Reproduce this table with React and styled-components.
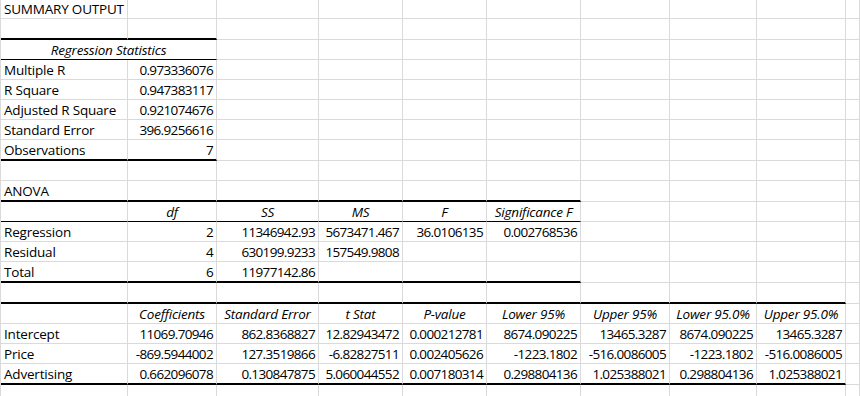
import React from 'react';
import styled, { createGlobalStyle } from 'styled-components';

const GlobalStyle = createGlobalStyle`
  html, body {
    margin: 0;
    padding: 0;
    background: #ffffff;
    overflow: hidden;
  }
`;

const GRID = '#dadada';
const COLS = '127px 89px 102px 84px 84px 94px 89px 87px 89px 1fr';

const Sheet = styled.div`
  width: 860px;
  height: 396px;
  overflow: hidden;
  border-left: 1px solid ${GRID};
  box-sizing: border-box;
  font-family: 'Open Sans', 'Noto Sans', sans-serif;
  font-size: 13.5px;
  color: #000;
`;

const Row = styled.div`
  display: grid;
  grid-template-columns: ${COLS};
  height: ${(props) => props.$h}px;
`;

const edgeStyle = {
  thick: '2px solid #000',
  thin: '1px solid #000',
};

const Cell = styled.div`
  box-sizing: border-box;
  display: flex;
  align-items: flex-end;
  justify-content: ${(props) =>
    props.$align === 'left' ? 'flex-start' : props.$align === 'center' ? 'center' : 'flex-end'};
  grid-column: span ${(props) => props.$span || 1};
  padding: 0 3px;
  border-right: 1px solid ${GRID};
  border-bottom: ${(props) => edgeStyle[props.$edge] || `1px solid ${GRID}`};
  font-style: ${(props) => (props.$italic ? 'italic' : 'normal')};
  letter-spacing: ${(props) => (props.$num ? '-0.65px' : '-0.2px')};
  line-height: 17px;
  white-space: nowrap;
`;

// each row: height, cell texts, header style, bottom edge across first n columns
const rows = [
  { h: 19, cells: ['SUMMARY OUTPUT'] },
  { h: 21, cells: [], edge: ['thick', 2] },
  { h: 20, cells: [], title: 'Regression Statistics', edge: ['thin', 2] },
  { h: 20, cells: ['Multiple R', '0.973336076'] },
  { h: 20, cells: ['R Square', '0.947383117'] },
  { h: 20, cells: ['Adjusted R Square', '0.921074676'] },
  { h: 20, cells: ['Standard Error', '396.9256616'] },
  { h: 21, cells: ['Observations', '7'], edge: ['thick', 2] },
  { h: 20, cells: [] },
  { h: 21, cells: ['ANOVA'], edge: ['thick', 6] },
  { h: 20, head: true, cells: ['', 'df', 'SS', 'MS', 'F', 'Significance F'], edge: ['thin', 6] },
  { h: 20, cells: ['Regression', '2', '11346942.93', '5673471.467', '36.0106135', '0.002768536'] },
  { h: 20, cells: ['Residual', '4', '630199.9233', '157549.9808'] },
  { h: 21, cells: ['Total', '6', '11977142.86'], edge: ['thick', 6] },
  { h: 21, cells: [], edge: ['thick', 9] },
  {
    h: 20,
    head: true,
    cells: ['', 'Coefficients', 'Standard Error', 't Stat', 'P-value', 'Lower 95%', 'Upper 95%', 'Lower 95.0%', 'Upper 95.0%'],
  },
  {
    h: 20,
    cells: ['Intercept', '11069.70946', '862.8368827', '12.82943472', '0.000212781', '8674.090225', '13465.3287', '8674.090225', '13465.3287'],
  },
  {
    h: 20,
    cells: ['Price', '-869.5944002', '127.3519866', '-6.82827511', '0.002405626', '-1223.1802', '-516.0086005', '-1223.1802', '-516.0086005'],
  },
  {
    h: 21,
    cells: ['Advertising', '0.662096078', '0.130847875', '5.060044552', '0.007180314', '0.298804136', '1.025388021', '0.298804136', '1.025388021'],
    edge: ['thick', 9],
  },
  { h: 20, cells: [] },
];

const SheetRow = ({ row }) => {
  const [edgeType, edgeCols] = row.edge || [null, 0];
  const edgeFor = (i) => (i < edgeCols ? edgeType : null);
  const out = [];
  let col = 0;
  if (row.title) {
    out.push(
      <Cell key="title" $span={2} $align="center" $italic $edge={edgeFor(0)}>
        {row.title}
      </Cell>
    );
    col = 2;
  }
  for (; col < 10; col++) {
    const text = row.cells[col] || '';
    const align = col === 0 ? 'left' : row.head ? 'center' : 'right';
    out.push(
      <Cell
        key={col}
        $align={align}
        $italic={row.head}
        $num={col > 0 && !row.head}
        $edge={edgeFor(col)}
      >
        {text}
      </Cell>
    );
  }
  return <Row $h={row.h}>{out}</Row>;
};

const App = () => (
  <>
    <GlobalStyle />
    <Sheet>
      {rows.map((row, index) => (
        <SheetRow key={index} row={row} />
      ))}
    </Sheet>
  </>
);

export default App;
